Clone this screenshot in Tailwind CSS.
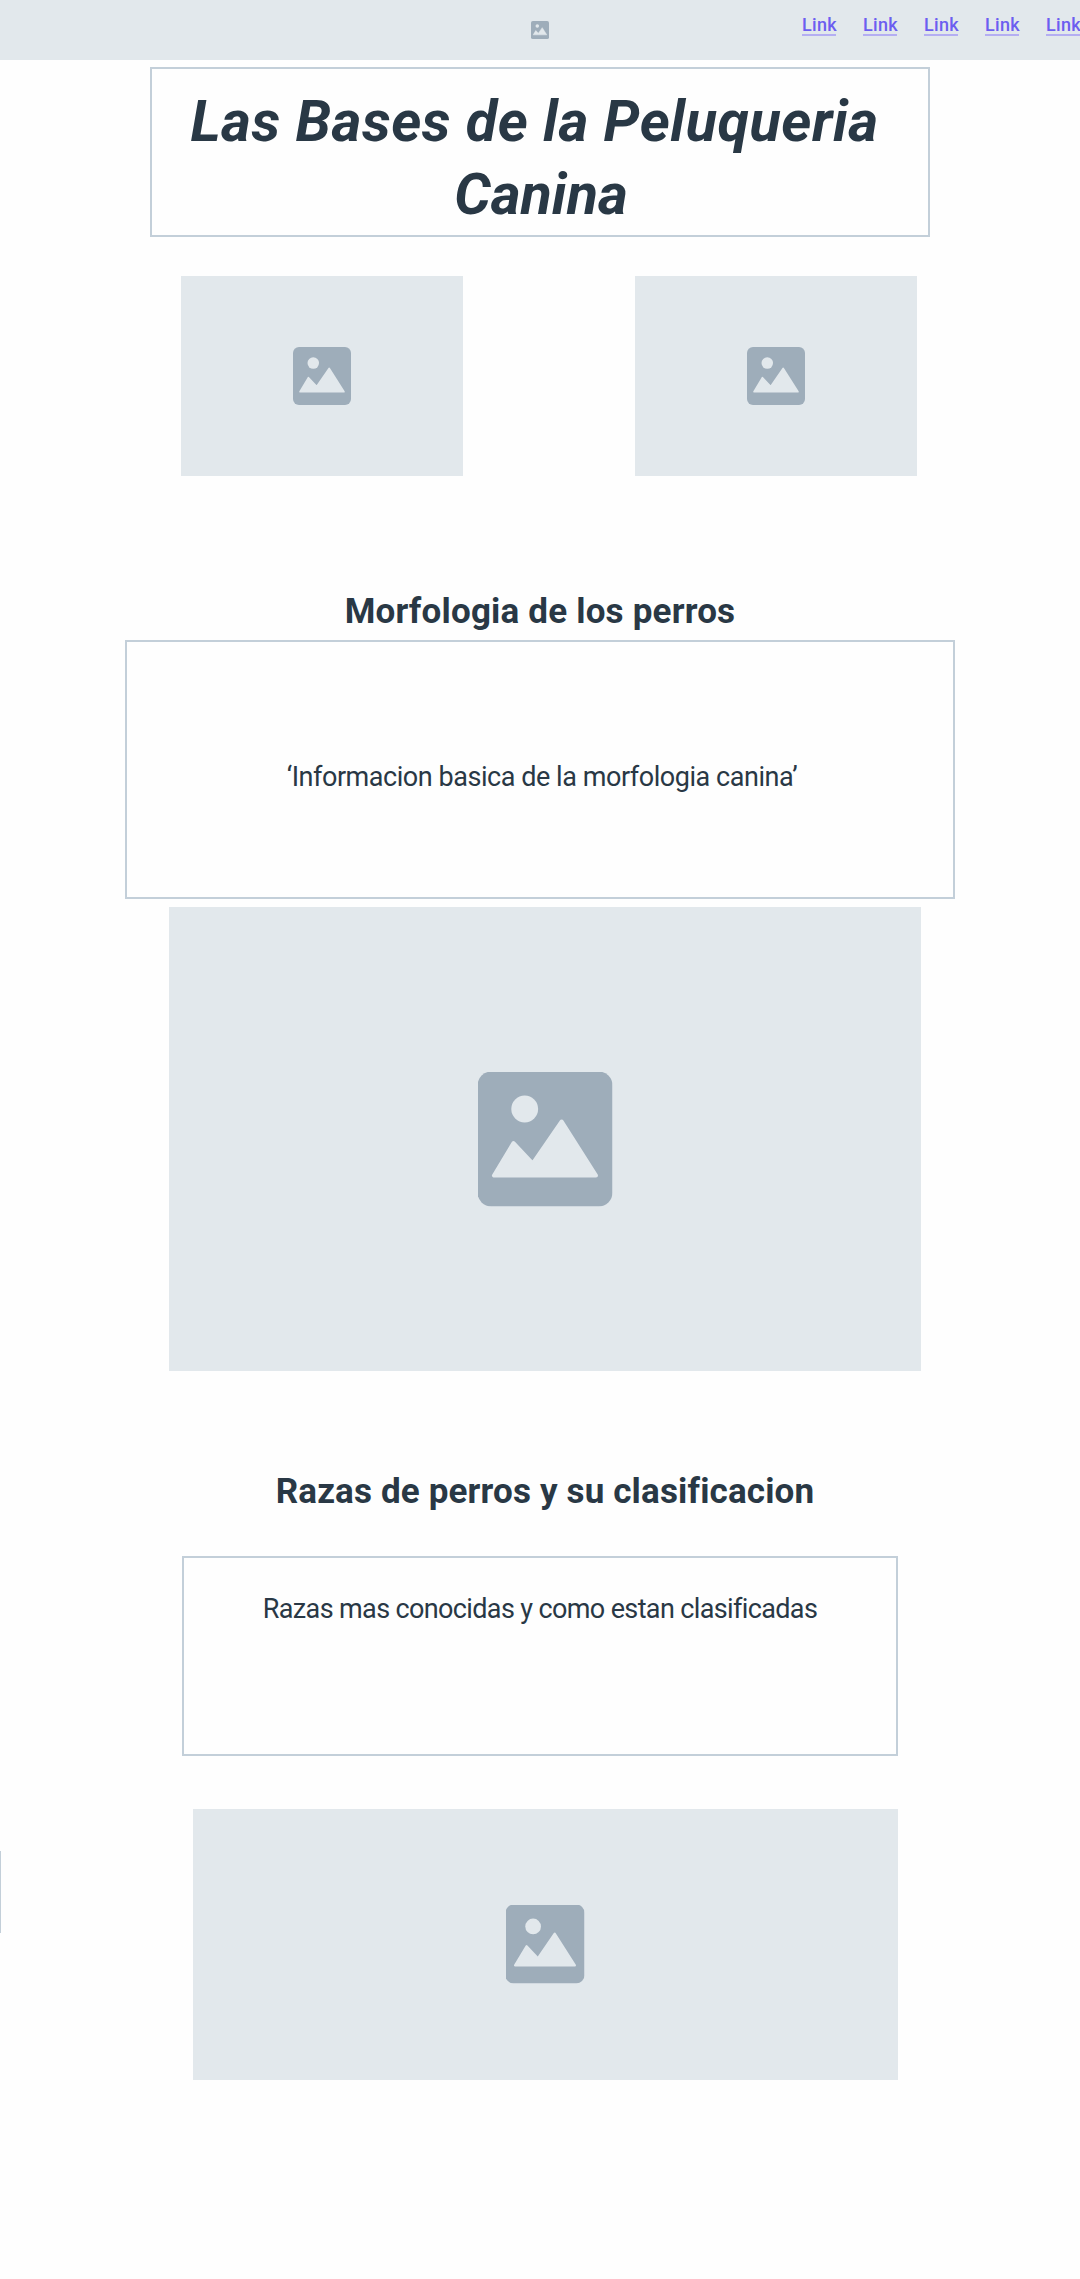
<!DOCTYPE html>
<html lang="es"><head><meta charset="utf-8"><title>Las Bases de la Peluqueria Canina</title>
<script src="https://cdn.jsdelivr.net/npm/@tailwindcss/browser@4"></script></head>
<body class="bg-[#fefefe] text-[#293845] font-['Roboto',sans-serif] overflow-x-hidden">
<svg class="hidden"><symbol id="picture" viewBox="0 0 135 135"><rect width="135" height="135" rx="14" fill="#9eadba"/><circle cx="47.2" cy="37.5" r="13.4" fill="#e2e8ec"/><path d="M36 71.5 16.5 104H118.5L84.200 50 55.300 92Z" fill="#e2e8ec" stroke="#e2e8ec" stroke-width="4" stroke-linejoin="round"/></symbol></svg>
<div class="relative h-[2279px] w-[1080px] overflow-hidden">
<header class="grid h-[60px] grid-cols-[531px_18px_253px_1fr] bg-[#e2e8ec]">
<span></span><svg class="mt-[21px] size-[18px]"><use href="#picture"/></svg><span></span>
<nav class="flex gap-[27px] pt-[15px] text-[18px] font-medium leading-[20px] tracking-[0.3px] text-[#6c5ef0]">
<a class="h-[21px] w-[34px] shrink-0 border-b-2 border-[#b4aef2] text-center">Link</a>
<a class="h-[21px] w-[34px] shrink-0 border-b-2 border-[#b4aef2] text-center">Link</a>
<a class="h-[21px] w-[34px] shrink-0 border-b-2 border-[#b4aef2] text-center">Link</a>
<a class="h-[21px] w-[34px] shrink-0 border-b-2 border-[#b4aef2] text-center">Link</a>
<a class="h-[21px] w-[34px] shrink-0 border-b-2 border-[#b4aef2] text-center">Link</a>
</nav></header>
<main>
<h1 class="mx-auto mt-[7px] h-[170px] w-[780px] border-2 border-[#c3cfd9] pt-[16px] text-center text-[57.500px] font-bold italic leading-[73px]"><span class="mr-[11px] tracking-[0.55px]">Las Bases de la Peluqueria</span><br><span class="ml-[2px]">Canina</span></h1>
<div class="mt-[39px] ml-[181px] flex gap-[172px]">
<div class="flex h-[200px] w-[282px] items-center justify-center bg-[#e2e8ec]"><svg class="size-[58px]"><use href="#picture"/></svg></div>
<div class="flex h-[200px] w-[282px] items-center justify-center bg-[#e2e8ec]"><svg class="size-[58px]"><use href="#picture"/></svg></div>
</div>
<h2 class="mt-[115px] h-[49px] text-center text-[35px] font-bold leading-[42px] tracking-[0.19px]">Morfologia de los perros</h2>
<p class="mx-auto flex h-[259px] w-[830px] justify-center border-2 border-[#c3cfd9] pt-[119px] pl-[4px] text-[27px] leading-[32px] tracking-[-0.45px] whitespace-nowrap">‘Informacion basica de la morfologia canina’</p>
<div class="mt-[8px] ml-[169px] flex h-[464px] w-[752px] items-center justify-center bg-[#e2e8ec]"><svg class="size-[136px] p-[0.5px]"><use href="#picture"/></svg></div>
<h2 class="mt-[100px] ml-[10px] h-[85px] text-center text-[35px] font-bold leading-[42px] tracking-[0.15px]">Razas de perros y su clasificacion</h2>
<p class="mx-auto flex h-[200px] w-[716px] justify-center border-2 border-[#c3cfd9] pt-[35px] text-[27px] leading-[32px] tracking-[-0.63px] whitespace-nowrap">Razas mas conocidas y como estan clasificadas</p>
<div class="mt-[53px] ml-[193px] flex h-[271px] w-[705px] items-center justify-center bg-[#e2e8ec]"><svg class="mr-px mb-px size-[80px] p-[0.5px]"><use href="#picture"/></svg></div>
</main>
<div class="absolute left-0 top-[1851px] h-[82px] w-px bg-[#c3cfd9]"></div>
</div>
</body></html>
